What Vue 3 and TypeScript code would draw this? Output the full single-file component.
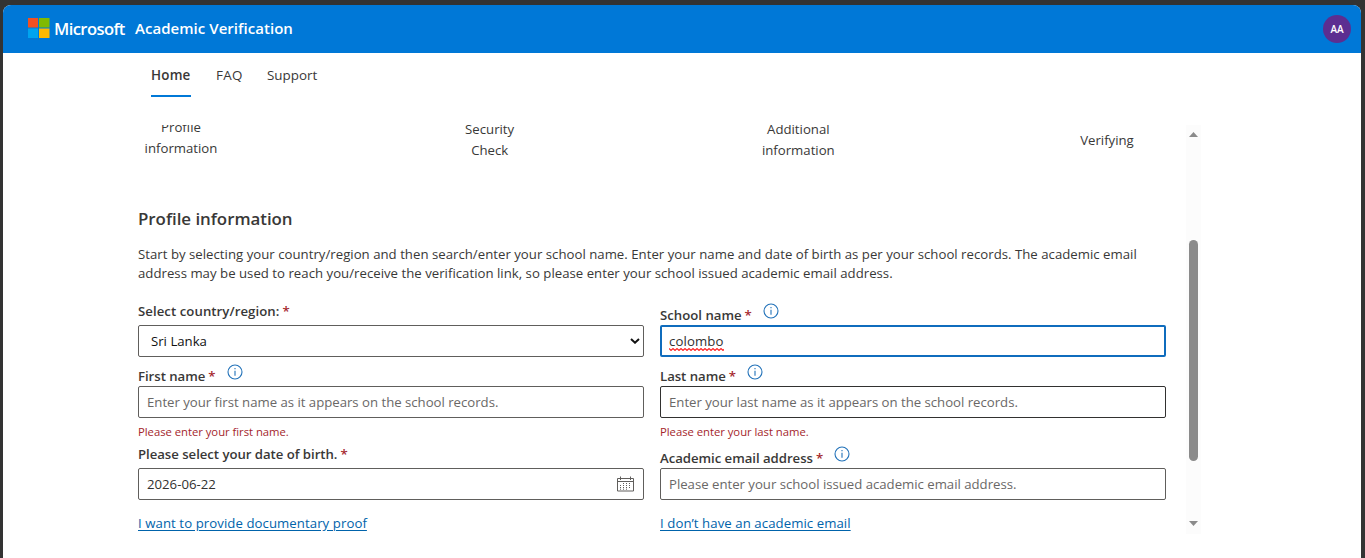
<template>
  <div class="window">
    <header class="topbar">
      <svg class="logo" width="22" height="20" viewBox="0 0 22 20">
        <rect x="0" y="0" width="10" height="9.5" fill="#f25022" />
        <rect x="11" y="0" width="10.5" height="9.5" fill="#7fba00" />
        <rect x="0" y="10.5" width="10" height="9.5" fill="#00a4ef" />
        <rect x="11" y="10.5" width="10.5" height="9.5" fill="#ffb900" />
      </svg>
      <span class="brand">Microsoft</span>
      <span class="product">Academic Verification</span>
      <span class="avatar">AA</span>
    </header>

    <nav class="tabs">
      <a
        v-for="tab in tabs"
        :key="tab"
        :class="['tab', { active: tab === activeTab }]"
        @click="activeTab = tab"
      >{{ tab }}</a>
    </nav>

    <div class="scroller">
      <main class="content">
        <!-- Steps -->
        <ol class="steps">
          <li v-for="(step, i) in steps" :key="i" :class="'step' + i">
            <span v-for="line in step" :key="line">{{ line }}</span>
          </li>
        </ol>

        <h1>Profile information</h1>
        <p class="intro">
          Start by selecting your country/region and then search/enter your school name. Enter your name and date of birth as per your school records. The academic email<br />
          address may be used to reach you/receive the verification link, so please enter your school issued academic email address.
        </p>

        <!-- Form -->
        <form class="fields" @submit.prevent>
          <div v-for="field in fields" :key="field.id" :class="['field', field.id]">
            <label :for="field.id" :class="{ lower: field.info }">
              <span class="caption">{{ field.label }}</span>
              <span class="star">*</span>
              <svg v-if="field.info" class="info" width="16" height="16" viewBox="0 0 16 16">
                <circle cx="8" cy="8" r="7" fill="none" stroke="#2272b9" stroke-width="1.1" />
                <path d="M8 6.7v5M8 4v1.3" stroke="#2272b9" stroke-width="1.1" />
              </svg>
            </label>

            <div v-if="field.id === 'country'" class="box select">
              <span>{{ country }}</span>
              <svg class="chevron" width="10" height="6" viewBox="0 0 10 6">
                <path d="M1 1l4 3.7L9 1" fill="none" stroke="#111" stroke-width="2" />
              </svg>
            </div>
            <div v-else-if="field.id === 'school'" class="box focused">
              <span class="misspelt">{{ school }}
                <svg class="squiggle" width="55" height="3" viewBox="0 0 55 3">
                  <path :d="squiggle" fill="none" stroke="#f22" stroke-width="1.1" />
                </svg>
              </span>
            </div>
            <div v-else-if="field.id === 'birth'" class="box">
              <span>{{ birthDate }}</span>
              <svg class="calendar" width="17" height="16" viewBox="0 0 17 16">
                <path d="M.5 2.500h16v12.500H.5zM.5 5.500h16M3.500 0.500v3.500M13.500 0.500v3.500" fill="none" stroke="#605e5c" />
                <path d="M6 7.500h8M3 9.500h11M3 11.500h11M3 13.200h8" stroke="#605e5c" stroke-dasharray="1 2" />
              </svg>
            </div>
            <input
              v-else
              :id="field.id"
              v-model="values[field.id]"
              class="box"
              type="text"
              :placeholder="field.placeholder"
            />

            <p v-if="field.error" class="error">{{ field.error }}</p>
            <a v-if="field.link" class="link" href="#" @click.prevent>{{ field.link }}</a>
          </div>
        </form>
      </main>

      <div class="scrollbar">
        <svg width="9" height="5" viewBox="0 0 9 5"><path d="M4.5 0L9 5H0z" fill="#8b8b8b" /></svg>
        <div class="track"><div class="thumb"></div></div>
        <svg width="9" height="5" viewBox="0 0 9 5"><path d="M0 0h9L4.5 5z" fill="#8b8b8b" /></svg>
      </div>
    </div>
  </div>
</template>

<script setup lang="ts">
import { reactive, ref } from "vue";

interface Field {
  id: string;
  label: string;
  info?: boolean;
  placeholder?: string;
  error?: string;
  link?: string;
}

const tabs = ["Home", "FAQ", "Support"];
const activeTab = ref("Home");

const steps = [
  ["Profile", "information"],
  ["Security", "Check"],
  ["Additional", "information"],
  ["Verifying"]
];

const country = ref("Sri Lanka");
const school = ref("colombo");
const birthDate = ref("2026-06-22");
const values = reactive<Record<string, string>>({ first: "", last: "", email: "" });

const fields: Field[] = [
  { id: "country", label: "Select country/region:" },
  { id: "school", label: "School name", info: true },
  {
    id: "first",
    label: "First name",
    info: true,
    placeholder: "Enter your first name as it appears on the school records.",
    error: "Please enter your first name."
  },
  {
    id: "last",
    label: "Last name",
    info: true,
    placeholder: "Enter your last name as it appears on the school records.",
    error: "Please enter your last name."
  },
  {
    id: "birth",
    label: "Please select your date of birth.",
    link: "I want to provide documentary proof"
  },
  {
    id: "email",
    label: "Academic email address",
    info: true,
    placeholder: "Please enter your school issued academic email address.",
    link: "I don’t have an academic email"
  }
];

// Zigzag under the misspelt word
const squiggle = "M0 .5" + "l2 2l2 -2".repeat(14);
</script>

<style>
body {
  background: #333;
  overflow: hidden;
}
</style>

<style scoped>
.window {
  box-sizing: border-box;
  height: 553px;
  margin: 5px 4px 0 3px;
  border-radius: 8px 8px 0 0;
  overflow: hidden;
  background: #fff;
  color: #393837;
  font-family: "Open Sans", "Noto Sans", sans-serif;
  font-size: 13.2px;
}

.topbar {
  display: flex;
  align-items: center;
  height: 48px;
  padding: 0 10px 0 25px;
  background: #0078d7;
  color: #fff;
  font-weight: 600;
}

.logo {
  margin-top: -2px;
}

.brand {
  width: 81px;
  margin: -2px 0 0 4px;
  font-size: 16.6px;
  letter-spacing: -0.6px;
}

.product {
  margin-top: -2px;
  font-size: 15px;
  letter-spacing: 0.04px;
}

.avatar {
  width: 28px;
  height: 28px;
  margin-left: auto;
  border-radius: 50%;
  background: #5c2e91;
  font-size: 10px;
  line-height: 28px;
  text-align: center;
}

.tabs {
  display: flex;
  gap: 25px;
  height: 72px;
  padding-left: 148px;
}

.tab {
  box-sizing: border-box;
  height: 44px;
  font-size: 13.4px;
  line-height: 45px;
  cursor: pointer;
}

.tab.active {
  width: 40px;
  border-bottom: 2px solid #0078d7;
  font-weight: 600;
  letter-spacing: 0.2px;
}

.tab:nth-child(2) {
  width: 26px;
  letter-spacing: 0.3px;
}

.scroller {
  display: flex;
  height: 409px;
  margin-left: 135px;
  overflow: hidden;
}

.content {
  width: 1028px;
  margin-right: 20px;
}

.steps {
  display: flex;
  justify-content: space-between;
  height: 82px;
  margin: -8px 0 0;
  padding: 0 16px 0 0;
  list-style: none;
}

.steps li {
  display: flex;
  flex-direction: column;
  width: 86px;
  line-height: 21px;
  text-align: center;
}

.steps .step1,
.steps .step2 {
  padding-top: 2px;
}

.steps .step3 {
  padding-top: 13px;
}

h1 {
  margin: 7px 0 0;
  font-size: 16.9px;
  font-weight: 600;
  letter-spacing: -0.03px;
  line-height: 26px;
}

.intro {
  height: 38px;
  margin: 13px 0 16px;
  letter-spacing: 0.018px;
  line-height: 19px;
  white-space: nowrap;
}

.fields {
  display: grid;
  grid-template-columns: 506px 506px;
  grid-template-rows: 61px 82px 100px;
  column-gap: 16px;
}

label {
  display: flex;
  height: 26px;
  line-height: 24px;
  font-weight: 600;
}

label.lower {
  line-height: 32px;
}

.star {
  margin-left: 3px;
  color: #a4262c;
}

.info {
  margin: 4px 0 0 11px;
}

.country .caption {
  letter-spacing: 0.06px;
}

.first .caption,
.last .caption,
.birth .caption,
.email .caption {
  letter-spacing: -0.04px;
}

.box {
  box-sizing: border-box;
  display: flex;
  align-items: center;
  width: 506px;
  height: 32px;
  padding: 0 8px;
  border: 1px solid #605e5c;
  border-radius: 2px;
  outline: none;
  background: #fff;
  color: #323130;
  font: inherit;
}

.box::placeholder {
  color: #6a6867;
  letter-spacing: -0.015px;
  opacity: 1;
}

.last .box {
  border-color: #323130;
}

.select {
  padding: 0 3px 0 12px;
  color: #111;
}

.chevron,
.calendar {
  margin-left: auto;
}

.calendar {
  margin-right: 1px;
}

.focused {
  padding: 0 7px;
  border: 2px solid #0f6cbd;
}

.misspelt {
  position: relative;
  letter-spacing: 0.12px;
}

.squiggle {
  position: absolute;
  left: 0;
  bottom: -1px;
}

.error {
  margin: 4px 0 0;
  color: #a4262c;
  font-size: 11.3px;
  letter-spacing: -0.03px;
  line-height: 20px;
}

.link {
  display: block;
  margin-top: 13px;
  color: #0063ab;
  letter-spacing: 0.07px;
  line-height: 21px;
  text-underline-offset: 2px;
}

.scrollbar {
  box-sizing: border-box;
  display: flex;
  flex-direction: column;
  align-items: center;
  width: 15px;
  height: 409px;
  padding: 7px 0 8px;
  background: #fcfcfc;
}

.track {
  flex: 1;
}

.thumb {
  width: 9px;
  height: 221px;
  margin-top: 103px;
  border-radius: 5px;
  background: #8b8b8b;
}
</style>
